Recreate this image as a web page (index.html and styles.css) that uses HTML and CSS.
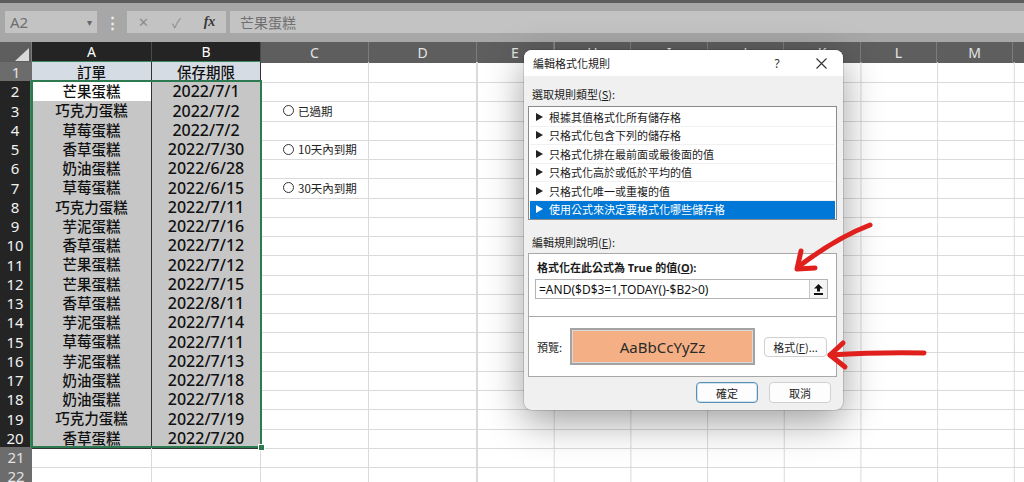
FILE: index.html
```html
<!DOCTYPE html>
<html lang="zh-Hant">
<head>
<meta charset="utf-8">
<title>編輯格式化規則</title>
<link rel="stylesheet" href="styles.css">
</head>
<body>
<div class="toolbar">
  <div class="namebox"><span>A2</span><span class="dd">▾</span></div>
  <div class="vsep">⋮</div>
  <div class="fxbox"><span class="ico">✕</span><span class="ico">✓</span><span class="fx">fx</span></div>
  <div class="formula">芒果蛋糕</div>
</div>

<div class="sheet">
  <div class="row hrow">
    <div class="corner"><div class="tri"></div></div>
    <div class="ch sel">A</div>
    <div class="ch sel">B</div>
    <div class="ch">C</div>
    <div class="ch">D</div>
    <div class="ch-rest">
      <div class="ch w77">E</div><div class="ch w77 dbl">H</div><div class="ch w77">I</div><div class="ch w76">J</div><div class="ch w77">K</div><div class="ch w76">L</div><div class="ch w76">M</div><div class="ch grow"></div>
    </div>
  </div>

  <div class="row"><div class="rh">1</div><div class="t h1">訂單</div><div class="t h1">保存期限</div><div class="c"></div><div class="c"></div><div class="rest"></div></div>
  <div class="row"><div class="rh sel">2</div><div class="t act">芒果蛋糕</div><div class="t g date">2022/7/1</div><div class="c"></div><div class="c"></div><div class="rest"></div></div>
  <div class="row"><div class="rh sel">3</div><div class="t g">巧克力蛋糕</div><div class="t g date">2022/7/2</div><div class="c"><div class="opt"><span class="radio"></span>已過期</div></div><div class="c"></div><div class="rest"></div></div>
  <div class="row"><div class="rh sel">4</div><div class="t g">草莓蛋糕</div><div class="t g date">2022/7/2</div><div class="c"></div><div class="c"></div><div class="rest"></div></div>
  <div class="row"><div class="rh sel">5</div><div class="t g">香草蛋糕</div><div class="t g date">2022/7/30</div><div class="c"><div class="opt"><span class="radio"></span>10天內到期</div></div><div class="c"></div><div class="rest"></div></div>
  <div class="row"><div class="rh sel">6</div><div class="t g">奶油蛋糕</div><div class="t g date">2022/6/28</div><div class="c"></div><div class="c"></div><div class="rest"></div></div>
  <div class="row"><div class="rh sel">7</div><div class="t g">草莓蛋糕</div><div class="t g date">2022/6/15</div><div class="c"><div class="opt"><span class="radio"></span>30天內到期</div></div><div class="c"></div><div class="rest"></div></div>
  <div class="row"><div class="rh sel">8</div><div class="t g">巧克力蛋糕</div><div class="t g date">2022/7/11</div><div class="c"></div><div class="c"></div><div class="rest"></div></div>
  <div class="row"><div class="rh sel">9</div><div class="t g">芋泥蛋糕</div><div class="t g date">2022/7/16</div><div class="c"></div><div class="c"></div><div class="rest"></div></div>
  <div class="row"><div class="rh sel">10</div><div class="t g">香草蛋糕</div><div class="t g date">2022/7/12</div><div class="c"></div><div class="c"></div><div class="rest"></div></div>
  <div class="row"><div class="rh sel">11</div><div class="t g">芒果蛋糕</div><div class="t g date">2022/7/12</div><div class="c"></div><div class="c"></div><div class="rest"></div></div>
  <div class="row"><div class="rh sel">12</div><div class="t g">芒果蛋糕</div><div class="t g date">2022/7/15</div><div class="c"></div><div class="c"></div><div class="rest"></div></div>
  <div class="row"><div class="rh sel">13</div><div class="t g">香草蛋糕</div><div class="t g date">2022/8/11</div><div class="c"></div><div class="c"></div><div class="rest"></div></div>
  <div class="row"><div class="rh sel">14</div><div class="t g">芋泥蛋糕</div><div class="t g date">2022/7/14</div><div class="c"></div><div class="c"></div><div class="rest"></div></div>
  <div class="row"><div class="rh sel">15</div><div class="t g">草莓蛋糕</div><div class="t g date">2022/7/11</div><div class="c"></div><div class="c"></div><div class="rest"></div></div>
  <div class="row"><div class="rh sel">16</div><div class="t g">芋泥蛋糕</div><div class="t g date">2022/7/13</div><div class="c"></div><div class="c"></div><div class="rest"></div></div>
  <div class="row"><div class="rh sel">17</div><div class="t g">奶油蛋糕</div><div class="t g date">2022/7/18</div><div class="c"></div><div class="c"></div><div class="rest"></div></div>
  <div class="row"><div class="rh sel">18</div><div class="t g">奶油蛋糕</div><div class="t g date">2022/7/18</div><div class="c"></div><div class="c"></div><div class="rest"></div></div>
  <div class="row"><div class="rh sel">19</div><div class="t g">巧克力蛋糕</div><div class="t g date">2022/7/19</div><div class="c"></div><div class="c"></div><div class="rest"></div></div>
  <div class="row"><div class="rh sel">20</div><div class="t g">香草蛋糕</div><div class="t g date">2022/7/20</div><div class="c"></div><div class="c"></div><div class="rest"></div></div>
  <div class="row"><div class="rh">21</div><div class="c"></div><div class="c"></div><div class="c"></div><div class="c"></div><div class="rest"></div></div>
  <div class="row"><div class="rh">22</div><div class="c"></div><div class="c"></div><div class="c"></div><div class="c"></div><div class="rest"></div></div>
</div>

<div class="selbox"></div>
<div class="fillhandle"></div>

<div class="dlg">
  <div class="dlg-title">
    <span class="tt">編輯格式化規則</span>
    <span class="help">?</span>
    <span class="close"><svg width="11" height="11" viewBox="0 0 11 11"><path d="M0.5 0.5 L10.5 10.5 M10.5 0.5 L0.5 10.5" stroke="#333" stroke-width="1.1" fill="none"/></svg></span>
  </div>
  <div class="dlg-body">
    <div class="lbl">選取規則類型(<u>S</u>):</div>
    <div class="list">
      <div class="item"><svg class="tri-r" width="7" height="8" viewBox="0 0 7 8"><polygon points="0,0 7,4 0,8" fill="#222"/></svg>根據其值格式化所有儲存格</div>
      <div class="item"><svg class="tri-r" width="7" height="8" viewBox="0 0 7 8"><polygon points="0,0 7,4 0,8" fill="#222"/></svg>只格式化包含下列的儲存格</div>
      <div class="item"><svg class="tri-r" width="7" height="8" viewBox="0 0 7 8"><polygon points="0,0 7,4 0,8" fill="#222"/></svg>只格式化排在最前面或最後面的值</div>
      <div class="item"><svg class="tri-r" width="7" height="8" viewBox="0 0 7 8"><polygon points="0,0 7,4 0,8" fill="#222"/></svg>只格式化高於或低於平均的值</div>
      <div class="item"><svg class="tri-r" width="7" height="8" viewBox="0 0 7 8"><polygon points="0,0 7,4 0,8" fill="#222"/></svg>只格式化唯一或重複的值</div>
      <div class="item on"><svg class="tri-r" width="7" height="8" viewBox="0 0 7 8"><polygon points="0,0 7,4 0,8" fill="#fff"/></svg>使用公式來決定要格式化哪些儲存格</div>
    </div>
    <div class="lbl lbl2">編輯規則說明(<u>E</u>):</div>
    <div class="group">
      <div class="g-top">
        <div class="blbl">格式化在此公式為 True 的值(<u>O</u>):</div>
        <div class="input"><span class="ftext">=AND($D$3=1,TODAY()-$B2&gt;0)</span><span class="ref"><svg width="9" height="11" viewBox="0 0 9 11"><polygon points="4.5,0 9,4.5 6,4.5 6,7.5 3,7.5 3,4.5 0,4.5" fill="#111"/><rect x="0" y="9" width="9" height="2" fill="#111"/></svg></span></div>
      </div>
      <div class="g-bot">
        <span class="plbl">預覽:</span>
        <div class="preview">AaBbCcYyZz</div>
        <div class="btn fmt">格式(<u>F</u>)...</div>
      </div>
    </div>
    <div class="actions">
      <div class="btn ok">確定</div>
      <div class="btn">取消</div>
    </div>
  </div>
</div>

<svg class="arrows" width="1024" height="482" viewBox="0 0 1024 482">
  <g stroke="#e0201c" stroke-width="5" fill="none" stroke-linecap="round" stroke-linejoin="round">
    <path d="M870 225 Q836 238 798 267"/>
    <path d="M801 251 L797 269 L815 268"/>
    <path d="M924 353 Q880 352 830 355"/>
    <path d="M843 343 L830 355 L845 367"/>
  </g>
</svg>
</body>
</html>
```

FILE: styles.css
```css
* { box-sizing: border-box; margin: 0; padding: 0; }

body {
  width: 1024px;
  height: 482px;
  overflow: hidden;
  background: #fff;
  position: relative;
  font-family: "Noto Sans", "Noto Sans CJK TC", sans-serif;
  color: #111;
}

/* ---------- toolbar ---------- */
.toolbar {
  height: 42px;
  background: #a7a7a7;
  border-top: 3px solid #5c5c5c;
  display: flex;
  align-items: flex-start;
  padding: 8px 0 0 5px;
}
.namebox {
  width: 92px;
  height: 22px;
  background: #c3c3c3;
  color: #6e6e6e;
  font-size: 15px;
  display: flex;
  align-items: center;
  justify-content: space-between;
  padding: 0 5px 0 5px;
}
.namebox .dd { font-size: 10px; color: #666; }
.vsep {
  width: 30px;
  height: 22px;
  display: flex;
  align-items: center;
  justify-content: center;
  color: #eeeeee;
  font-size: 15px;
  font-weight: bold;
}
.fxbox {
  width: 99px;
  height: 22px;
  background: #c3c3c3;
  display: flex;
}
.fxbox span {
  width: 33px;
  display: flex;
  align-items: center;
  justify-content: center;
}
.fxbox .ico { color: #8c8c8c; font-size: 13px; }
.fxbox .fx {
  font-family: "Liberation Serif", serif;
  font-style: italic;
  font-weight: bold;
  color: #3a3a3a;
  font-size: 14px;
}
.formula {
  flex: 1;
  margin-left: 4px;
  height: 22px;
  background: #c3c3c3;
  color: #707070;
  font-family: "Noto Sans CJK TC", sans-serif;
  font-size: 14px;
  display: flex;
  align-items: center;
  padding-left: 10px;
}

/* ---------- sheet ---------- */
.sheet { display: flex; flex-direction: column; }
.row {
  display: grid;
  grid-template-columns: 32px 120px 109px 108px 108px 1fr;
  height: 19.25px;
}
.row.hrow { height: 20px; }

.corner {
  background: #5e5e5e;
  display: flex;
  align-items: flex-end;
  justify-content: flex-end;
  padding: 0 2px 2px 0;
  border-right: 1px solid #7c7c7c;
}
.corner .tri {
  width: 14px;
  height: 13px;
  background: #d9d9d9;
  clip-path: polygon(100% 0, 100% 100%, 0 100%);
}
.ch {
  background: #5e5e5e;
  color: #e4e4e4;
  border-right: 1px solid #7c7c7c;
  font-size: 14px;
  display: flex;
  align-items: center;
  justify-content: center;
}
.ch.sel {
  background: #242424;
  color: #fff;
  border-bottom: 2px solid #3a8a5c;
  border-right-color: #4a4a4a;
}
.ch-rest { display: flex; }
.ch.w77 { width: 77px; flex: none; }
.ch.w76 { width: 76px; flex: none; }
.ch.grow { flex: 1; border-right: none; }
.ch.dbl { border-left: 1px solid #8a8a8a; }

.rh {
  background: #6c6c6c;
  color: #e2e2e2;
  font-size: 15px;
  display: flex;
  align-items: center;
  justify-content: center;
  border-bottom: 1px solid #858585;
}
.rh.sel {
  background: #242424;
  color: #f2f2f2;
  border-right: 2px solid #3a8a5c;
  border-bottom-color: #3a3a3a;
}
.c {
  border-right: 1px solid #dadada;
  border-bottom: 1px solid #dadada;
  display: flex;
  align-items: center;
}
.rest {
  border-bottom: 1px solid #dadada;
  background-image: linear-gradient(to left, #dadada 1px, transparent 1px);
  background-size: 76.7px 100%;
  background-position: 1px 0;
}
.t {
  border-right: 1px solid #333;
  border-bottom: 1px solid #333;
  display: flex;
  align-items: center;
  justify-content: center;
  font-family: "Noto Sans CJK TC", sans-serif;
  font-size: 14.5px;
  font-weight: 500;
  color: #111;
  line-height: 1;
}
.t.h1 { background: #d6dce4; }
.t.g { background: #c6c6c6; }
.t.act { background: #fff; }
.t.date {
  font-family: "Noto Sans", sans-serif;
  font-size: 16px;
  font-weight: 500;
}

.opt {
  display: flex;
  align-items: center;
  gap: 4px;
  padding-left: 22px;
  font-family: "Noto Sans CJK TC", sans-serif;
  font-size: 11.5px;
  color: #222;
}
.radio {
  width: 11px;
  height: 11px;
  border: 1px solid #333;
  border-radius: 50%;
  background: #fff;
}

.selbox {
  position: absolute;
  left: 31px;
  top: 80.25px;
  width: 231px;
  height: 368px;
  border: 2px solid #2e7a50;
}
.fillhandle {
  position: absolute;
  left: 258px;
  top: 444px;
  width: 7px;
  height: 7px;
  background: #2e7a50;
  border: 1px solid #fff;
}

/* ---------- dialog ---------- */
.dlg {
  position: absolute;
  left: 524px;
  top: 50px;
  width: 319px;
  height: 360px;
  background: #f0f0f0;
  border-radius: 8px;
  box-shadow: 0 12px 38px rgba(0,0,0,.38), 0 0 0 1px rgba(0,0,0,.12);
  overflow: hidden;
  font-family: "Noto Sans", "Noto Sans CJK TC", sans-serif;
  font-size: 11px;
  color: #1b1b1b;
}
.dlg-title {
  height: 26px;
  background: #fff;
  display: flex;
  align-items: center;
  padding-left: 9px;
}
.dlg-title .tt { flex: 1; font-family: "Noto Sans CJK TC", sans-serif; }
.dlg-title .help { width: 44px; text-align: center; font-size: 12px; color: #333; }
.dlg-title .close { width: 44px; display: flex; justify-content: center; }

.dlg-body {
  display: flex;
  flex-direction: column;
  padding: 10px 6px 0 4px;
}
.lbl { height: 16px; line-height: 16px; padding-left: 4px; font-family: "Noto Sans CJK TC", sans-serif; }
.lbl u, .blbl u, .btn u { text-decoration: underline; text-underline-offset: 1px; }
.lbl2 { margin-top: 14px; }
.list {
  margin-top: 4px;
  height: 114px;
  background: #fff;
  border: 1px solid #8a8a8a;
  padding: 1px 1px;
}
.item {
  height: 18.5px;
  display: flex;
  align-items: center;
  padding-left: 6px;
  gap: 6px;
  border-bottom: 1px solid #f1f1f1;
  font-family: "Noto Sans CJK TC", sans-serif;
}
.item.on { background: #0078d7; color: #fff; border-bottom-color: #0078d7; }

.group {
  margin-top: 3px;
  height: 124px;
  background: #fff;
  border: 1px solid #a8a8a8;
  display: flex;
  flex-direction: column;
}
.g-top {
  height: 63px;
  border-bottom: 1px solid #a8a8a8;
  padding: 6px 8px 0 6px;
}
.blbl {
  height: 16px;
  line-height: 16px;
  font-weight: bold;
  padding-left: 2px;
  font-family: "Noto Sans", "Noto Sans CJK TC", sans-serif;
}
.input {
  margin-top: 3px;
  height: 20px;
  border: 1px solid #b4b4b4;
  display: flex;
  align-items: center;
  justify-content: space-between;
  background: #fff;
}
.ftext { font-size: 12px; padding-left: 3px; color: #111; }
.ref {
  width: 18px;
  height: 18px;
  background: #f4f4f4;
  border-left: 1px solid #c8c8c8;
  display: flex;
  align-items: center;
  justify-content: center;
}
.g-bot {
  flex: 1;
  display: flex;
  align-items: center;
  padding: 0 9px 0 8px;
}
.plbl { width: 33px; font-family: "Noto Sans CJK TC", sans-serif; }
.preview {
  width: 185px;
  height: 37px;
  background: #f4b084;
  border: 2px solid #a3a3a3;
  box-shadow: inset 0 0 0 1px #d9d9d9;
  display: flex;
  align-items: center;
  justify-content: center;
  font-size: 15px;
  color: #2b2b2b;
}
.btn {
  height: 21px;
  width: 62px;
  background: #fdfdfd;
  border: 1px solid #d0d0d0;
  border-radius: 4px;
  display: flex;
  align-items: center;
  justify-content: center;
  font-family: "Noto Sans CJK TC", sans-serif;
  font-size: 11px;
  color: #222;
}
.btn.fmt { margin-left: auto; width: 63px; height: 20px; }
.actions {
  margin-top: 5px;
  display: flex;
  justify-content: flex-end;
  gap: 11px;
  padding-right: 6px;
}
.btn.ok { border-color: #5a90b4; box-shadow: inset 0 0 0 1px #cfe2ee; }

.arrows { position: absolute; left: 0; top: 0; pointer-events: none; }
```
